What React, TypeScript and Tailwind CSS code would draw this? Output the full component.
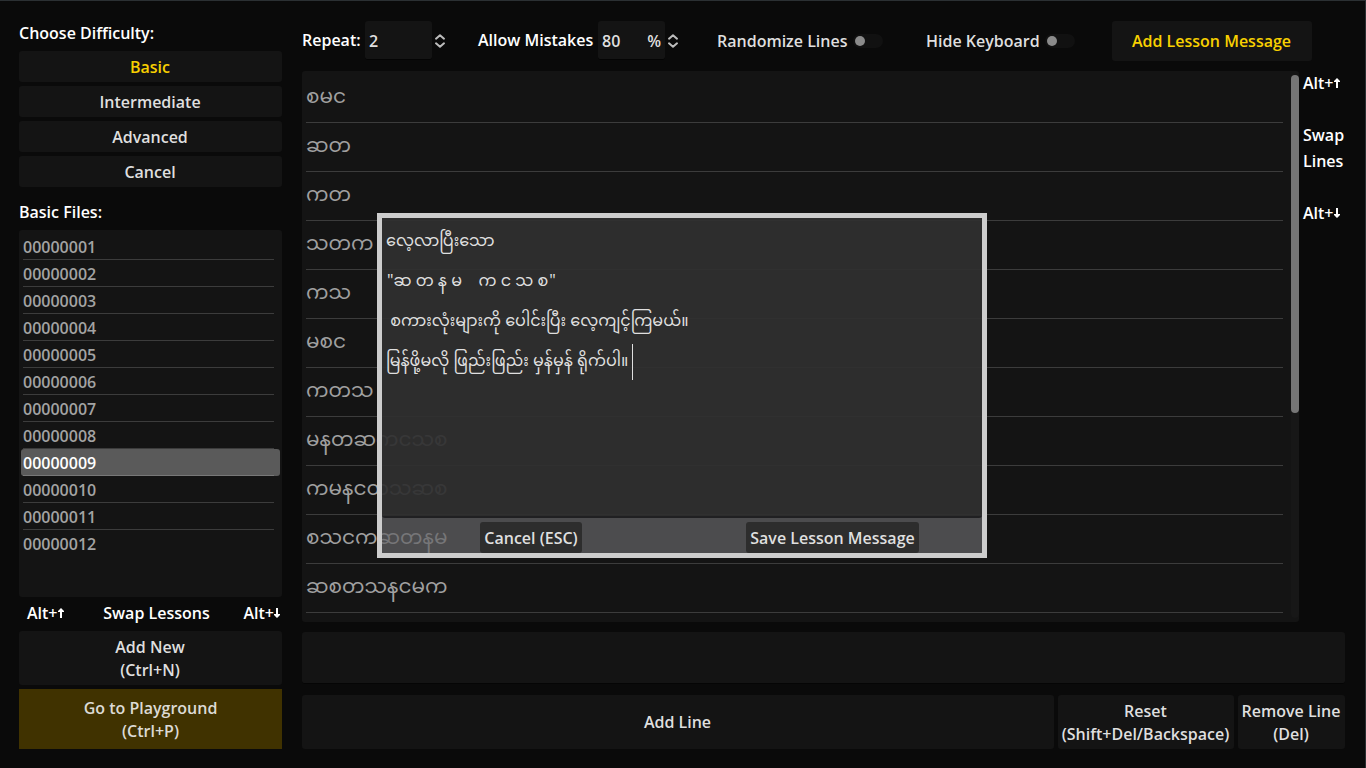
import React from 'react';

const btn =
  'flex items-center justify-center rounded-[3px] bg-[#141414] pr-px text-center text-[#dfdfdf]';

const files = Array.from({ length: 12 }, (_, i) => String(i + 1).padStart(8, '0'));

const lines = [
  'စမင',
  'ဆတ',
  'ကတ',
  'သတက',
  'ကသ',
  'မစင',
  'ကတသ',
  'မနတဆကငသစ',
  'ကမနငတသဆစ',
  'စသငကဆတနမ',
  'ဆစတသနငမက',
];

function Updown() {
  return (
    <svg width="16" height="16" viewBox="0 0 16 16" fill="none" stroke="#bdbdbd" strokeWidth="2" strokeLinejoin="round" strokeLinecap="round">
      <path d="M4 5.7 8 2.2l4 3.5M4 10.3l4 3.5 4-3.5" />
    </svg>
  );
}

function Arrow({ down = false }: { down?: boolean }) {
  return (
    <svg width="6" height="12" viewBox="0 0 6 12" fill="#fff">
      {down ? <path d="M3 11 6 8V7H4V1H2v6H0v1z" /> : <path d="M3 1 6 4v1H4v6H2V5H0V4z" />}
    </svg>
  );
}

function AltKey({ down = false }: { down?: boolean }) {
  return (
    <span className="flex items-center">
      Alt+
      <Arrow down={down} />
    </span>
  );
}

function Toggle() {
  return (
    <span className="flex h-[14px] w-[30px] items-center rounded-full bg-[#111111] pl-[2px]">
      <span className="h-[10px] w-[10px] rounded-full bg-[#8b8b8b]" />
    </span>
  );
}

function Sidebar() {
  return (
    <aside className="flex w-[263px] flex-col">
      <div className="mt-[19px] h-[26px] leading-[26px]">Choose Difficulty:</div>
      <div className="mt-[5px] flex flex-col gap-1">
        <button className={`${btn} h-[31px]`}>
          <span className="text-[#f8d000]">Basic</span>
        </button>
        <button className={`${btn} h-[31px]`}>Intermediate</button>
        <button className={`${btn} h-[31px]`}>Advanced</button>
        <button className={`${btn} h-[31px]`}>Cancel</button>
      </div>
      <div className="mt-3 h-[26px] leading-[26px]">Basic Files:</div>
      <ul className="mt-[5px] h-[367px] rounded-[3px] bg-[#141414] px-[2px] pt-[3px] text-[#a3a3a3]">
        {files.map((f, i) => (
          <li
            key={f}
            className={
              i === 8
                ? 'relative h-[27px] rounded-[3px] bg-[#5a5a5a] pl-[2px] leading-[28px] text-white'
                : 'relative h-[27px] pl-[2px] leading-[28px]'
            }
          >
            {f}
            {i < 11 && (
              <span
                className={
                  i === 8
                    ? 'absolute bottom-0 left-[2px] h-px w-[251px] bg-[#787878]'
                    : 'absolute bottom-0 left-[2px] h-px w-[251px] bg-[#3c3c3c]'
                }
              />
            )}
          </li>
        ))}
      </ul>
      <div className="mt-1 flex h-[24px] items-center justify-between pr-[2px] pl-2">
        <AltKey />
        <span className="pl-[6px]">Swap Lessons</span>
        <AltKey down />
      </div>
      <button className={`${btn} mt-[6px] h-[54px] pt-[2px] leading-[23px]`}>
        Add New
        <br />
        (Ctrl+N)
      </button>
      <button className="mt-1 h-[60px] bg-[#403200] pt-[2px] text-center leading-[23px] text-[#dcdad5]">
        Go to Playground
        <br />
        (Ctrl+P)
      </button>
    </aside>
  );
}

function Toolbar() {
  return (
    <div className="mt-5 flex h-[40px] items-start leading-[39px]">
      <span className="w-[63px]">Repeat:</span>
      <span className="h-[39px] w-[67px] rounded-[3px] border-b border-[#040404] bg-[#141414] pl-1 leading-[40px] text-[#dfdfdf]">2</span>
      <span className="flex h-[40px] w-[46px] items-center">
        <Updown />
      </span>
      <span className="w-[120px]">Allow Mistakes</span>
      <span className="flex h-[39px] w-[67px] justify-between rounded-[3px] border-b border-[#040404] bg-[#141414] pr-1 pl-1 leading-[40px] text-[#dfdfdf]">
        <span>80</span>
        <span>%</span>
      </span>
      <span className="flex h-[40px] w-[52px] items-center">
        <Updown />
      </span>
      <span className="flex h-[40px] w-[209px] items-center gap-[6px] text-[#dfdfdf]">
        Randomize Lines <Toggle />
      </span>
      <span className="flex h-[40px] w-[186px] items-center gap-[5px] text-[#dfdfdf]">
        Hide Keyboard <Toggle />
      </span>
      <button className={`${btn} h-[40px] w-[200px]`}>
        <span className="text-[#f8d000]">Add Lesson Message</span>
      </button>
    </div>
  );
}

function Dialog() {
  return (
    <div className="absolute top-[213px] left-[377px] flex h-[345px] w-[610px] flex-col border-[5px] border-[#cdcdcd] bg-[rgba(100,100,102,0.7)] bg-clip-padding">
      <div
        className="h-[300px] rounded-b-[3px] border-b-2 border-[#202022] bg-[rgba(35,35,35,0.75)] bg-clip-padding pt-[5px] pl-[4px] text-[16px] leading-[40px] font-normal whitespace-pre text-[#dfdfdf]"
        style={{ fontFamily: '"Noto Sans Myanmar", "Open Sans", sans-serif' }}
      >
        <div className="h-10">လေ့လာပြီးသော</div>
        <div className="flex h-10 gap-px pl-px">
          <span>"ဆ တ န မ    က င သ စ</span>
          <span>"</span>
        </div>
        <div className="h-10"> စကားလုံးများကို ပေါင်းပြီး လေ့ကျင့်ကြမယ်။</div>
        <div className="flex h-10">
          <span>မြန်ဖို့မလို ဖြည်းဖြည်း မှန်မှန် ရိုက်ပါ။</span>
          <span className="mt-px ml-1 h-[36px] w-px bg-[#dfdfdf]" />
        </div>
      </div>
      <div className="flex h-[35px] pt-[4px] pl-[98px]">
        <button className="h-[31px] w-[102px] rounded-[3px] bg-[#2d2d2d] text-[#dfdfdf]">Cancel (ESC)</button>
        <button className="ml-[164px] h-[31px] w-[173px] rounded-[3px] bg-[#2d2d2d] text-[#dfdfdf]">Save Lesson Message</button>
      </div>
    </div>
  );
}

export default function App() {
  return (
    <div
      className="relative flex h-[768px] w-[1366px] overflow-hidden border-t border-r border-[#2b3033] bg-[#0a0a0a] pl-[19px] text-[16px] font-semibold whitespace-nowrap text-white"
      style={{ fontFamily: '"Open Sans", "Noto Sans Myanmar", "Noto Sans", sans-serif' }}
    >
      <Sidebar />
      <main className="ml-5 flex w-[1043px] flex-col">
        <Toolbar />
        <div className="mt-[10px] flex h-[551px]">
          <div className="flex w-[997px] justify-between rounded-[3px] bg-[#141414] pl-1">
            <div className="w-[977px] pt-[3px] text-[20px] font-normal text-[#a0a0a0]">
              {lines.map((l) => (
                <div key={l} className="h-[49px] border-b border-[#3c3c3c] leading-[44px]">
                  {l}
                </div>
              ))}
            </div>
            <div className="mt-1 h-[543px] w-2 rounded-full bg-[#171717]">
              <div className="h-[338px] rounded-full bg-[#767676]" />
            </div>
          </div>
          <div className="-mt-px ml-1 leading-[26px]">
            <div className="flex h-[26px]">
              <AltKey />
            </div>
            <div className="mt-[26px]">
              Swap
              <br />
              Lines
            </div>
            <div className="mt-[26px] flex h-[26px]">
              <AltKey down />
            </div>
          </div>
        </div>
        <div className="mt-[10px] h-[52px] rounded-[3px] border-b border-[#050505] bg-[#141414]" />
        <div className="mt-[11px] flex h-[54px] gap-1 leading-[23px]">
          <button className={`${btn} w-[752px]`}>Add Line</button>
          <button className={`${btn} w-[176px] pt-[2px]`}>
            Reset
            <br />
            (Shift+Del/Backspace)
          </button>
          <button className={`${btn} w-[107px] pt-[2px]`}>
            Remove Line
            <br />
            (Del)
          </button>
        </div>
      </main>
      <div className="absolute -top-px left-0">
        <Dialog />
      </div>
    </div>
  );
}
